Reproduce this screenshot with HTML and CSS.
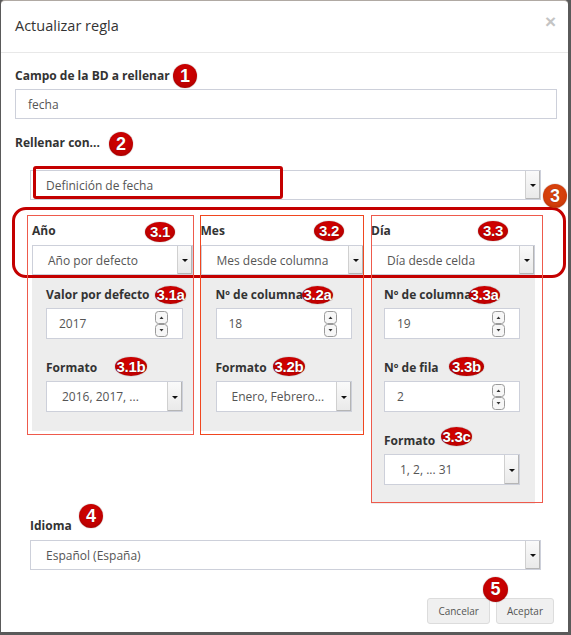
FILE: index.html
```html
<!DOCTYPE html>
<html lang="es">
<head>
<meta charset="utf-8">
<title>Actualizar regla</title>
<link rel="stylesheet" href="styles.css">
</head>
<body>
<div class="modal">
  <div class="modal-header">
    <h4 class="title">Actualizar regla</h4>
    <span class="close">×</span>
  </div>
  <div class="modal-body">
    <div class="group">
      <div class="lbl">Campo de la BD a rellenar</div>
      <div class="input wide">fecha</div>
    </div>
    <div class="group g2">
      <div class="lbl">Rellenar con...</div>
      <div class="select indent"><span class="val">Definición de fecha</span><span class="arrow"></span></div>
    </div>
    <div class="cols">
      <div class="col">
        <div class="lbl">Año</div>
        <div class="select csel"><span class="val">Año por defecto</span><span class="arrow"></span></div>
        <div class="panel p1">
          <div class="pg">
            <div class="lbl">Valor por defecto</div>
            <div class="input num"><span class="val">2017</span><span class="spin"><svg width="13" height="26" viewBox="0 0 13 26"><rect x="0.5" y="0.5" width="12" height="12" rx="3" fill="#f7f7f7" stroke="#9a9a9a"/><rect x="0.5" y="13.5" width="12" height="12" rx="3" fill="#f7f7f7" stroke="#9a9a9a"/><path d="M4.5 8 L6.5 5.5 L8.5 8 Z" fill="#333"/><path d="M4.5 18 L6.5 20.5 L8.5 18 Z" fill="#333"/></svg></span></div>
          </div>
          <div class="pg">
            <div class="lbl">Formato</div>
            <div class="select psel"><span class="val">2016, 2017, ...</span><span class="arrow"></span></div>
          </div>
        </div>
      </div>
      <div class="col">
        <div class="lbl">Mes</div>
        <div class="select csel"><span class="val">Mes desde columna</span><span class="arrow"></span></div>
        <div class="panel p2">
          <div class="pg">
            <div class="lbl">Nº de columna</div>
            <div class="input num"><span class="val">18</span><span class="spin"><svg width="13" height="26" viewBox="0 0 13 26"><rect x="0.5" y="0.5" width="12" height="12" rx="3" fill="#f7f7f7" stroke="#9a9a9a"/><rect x="0.5" y="13.5" width="12" height="12" rx="3" fill="#f7f7f7" stroke="#9a9a9a"/><path d="M4.5 8 L6.5 5.5 L8.5 8 Z" fill="#333"/><path d="M4.5 18 L6.5 20.5 L8.5 18 Z" fill="#333"/></svg></span></div>
          </div>
          <div class="pg">
            <div class="lbl">Formato</div>
            <div class="select psel"><span class="val">Enero, Febrero...</span><span class="arrow"></span></div>
          </div>
        </div>
      </div>
      <div class="col">
        <div class="lbl">Día</div>
        <div class="select csel"><span class="val">Día desde celda</span><span class="arrow"></span></div>
        <div class="panel p3">
          <div class="pg">
            <div class="lbl">Nº de columna</div>
            <div class="input num"><span class="val">19</span><span class="spin"><svg width="13" height="26" viewBox="0 0 13 26"><rect x="0.5" y="0.5" width="12" height="12" rx="3" fill="#f7f7f7" stroke="#9a9a9a"/><rect x="0.5" y="13.5" width="12" height="12" rx="3" fill="#f7f7f7" stroke="#9a9a9a"/><path d="M4.5 8 L6.5 5.5 L8.5 8 Z" fill="#333"/><path d="M4.5 18 L6.5 20.5 L8.5 18 Z" fill="#333"/></svg></span></div>
          </div>
          <div class="pg">
            <div class="lbl">Nº de fila</div>
            <div class="input num"><span class="val">2</span><span class="spin"><svg width="13" height="26" viewBox="0 0 13 26"><rect x="0.5" y="0.5" width="12" height="12" rx="3" fill="#f7f7f7" stroke="#9a9a9a"/><rect x="0.5" y="13.5" width="12" height="12" rx="3" fill="#f7f7f7" stroke="#9a9a9a"/><path d="M4.5 8 L6.5 5.5 L8.5 8 Z" fill="#333"/><path d="M4.5 18 L6.5 20.5 L8.5 18 Z" fill="#333"/></svg></span></div>
          </div>
          <div class="pg">
            <div class="lbl">Formato</div>
            <div class="select psel"><span class="val">1, 2, ... 31</span><span class="arrow"></span></div>
          </div>
        </div>
      </div>
    </div>
    <div class="group g4">
      <div class="lbl">Idioma</div>
      <div class="select indent"><span class="val">Español (España)</span><span class="arrow"></span></div>
    </div>
  </div>
  <div class="modal-footer">
    <button class="btn">Cancelar</button>
    <button class="btn">Aceptar</button>
  </div>
</div>

<div class="box box-def"></div>
<div class="box box-big"></div>
<div class="thin t1"></div>
<div class="thin t2"></div>
<div class="thin t3"></div>

<div class="num-b n1">1</div>
<div class="num-b n2">2</div>
<div class="num-b n3">3</div>
<div class="num-b n4">4</div>
<div class="num-b n5">5</div>

<div class="tag a31">3.1</div>
<div class="tag a32">3.2</div>
<div class="tag a33">3.3</div>
<div class="tag a31a">3.1a</div>
<div class="tag a32a">3.2a</div>
<div class="tag a33a">3.3a</div>
<div class="tag a31b">3.1b</div>
<div class="tag a32b">3.2b</div>
<div class="tag a33b">3.3b</div>
<div class="tag a33c">3.3c</div>
</body>
</html>
```

FILE: styles.css
```css
html, body {
  margin: 0;
  padding: 0;
}
body {
  position: relative;
  width: 571px;
  height: 635px;
  background: #5a5a5a;
  font-family: "Open Sans", "Liberation Sans", sans-serif;
  overflow: hidden;
}
.modal {
  box-sizing: border-box;
  margin: 0 3px 0 1px;
  width: 567px;
  height: 632px;
  background: #fff;
  border-top: 1px solid #b0a9a3;
  border-radius: 4px 4px 0 0;
  display: flex;
  flex-direction: column;
}
.modal-header {
  height: 51px;
  border-bottom: 1px solid #e8e8e8;
  display: flex;
  align-items: center;
  justify-content: space-between;
  padding: 0 12px 0 14px;
}
.title {
  margin: 0;
  font-size: 14.5px;
  font-weight: 400;
  color: #333;
  line-height: 1;
}
.close {
  font-family: "Liberation Sans", sans-serif;
  font-weight: 700;
  font-size: 19px;
  color: #c4c4c4;
  align-self: flex-start;
  margin-top: 10px;
  line-height: 22px;
}
.modal-body {
  padding: 16px 11px 0 14px;
}
.lbl {
  font-weight: 700;
  font-size: 12px;
  line-height: 14px;
  color: #333;
}
.group .lbl {
  margin-bottom: 6px;
}
.input, .select {
  box-sizing: border-box;
  height: 30px;
  border: 1px solid #cdd0da;
  background: #fff;
  font-size: 12px;
  color: #555;
  display: flex;
  align-items: center;
}
.input.wide {
  padding-left: 12px;
}
.g2 {
  margin-top: 17px;
}
.g2 .lbl {
  margin-bottom: 20px;
}
.indent {
  margin: 0 16px 0 15px;
}
.select .val {
  flex: 1;
  padding-left: 15px;
  white-space: nowrap;
  overflow: hidden;
}
.arrow {
  align-self: stretch;
  width: 14px;
  background: linear-gradient(#fafafa, #e9e9e9);
  border-left: 1px solid #d0d0d0;
  box-shadow: inset -1px -1px 0 #b5b5b5;
  position: relative;
}
.arrow::after {
  content: "";
  position: absolute;
  left: 4px;
  top: 50%;
  margin-top: -1px;
  border-left: 3px solid transparent;
  border-right: 3px solid transparent;
  border-top: 3px solid #111;
}
.cols {
  display: grid;
  grid-template-columns: 161px 163px 164px;
  column-gap: 7.5px;
  align-items: start;
  margin: 24px 0 0 17px;
}
.col > .lbl {
  margin-bottom: 7px;
}
.csel {
  height: 30px;
}
.panel {
  background: #ededed;
  padding: 13px 10px 19px 14px;
}
.p2 {
  padding-left: 15px;
  padding-right: 12px;
}
.p3 {
  padding-left: 13px;
  padding-right: 15px;
}
.pg + .pg {
  margin-top: 22px;
}
.pg .lbl {
  margin-bottom: 6px;
}
.panel .input, .panel .select {
  height: 31px;
}
.num {
  padding-left: 12px;
  justify-content: space-between;
}
.num .val {
  flex: 1;
}
.spin {
  width: 13px;
  height: 26px;
  margin-right: 14px;
}
.spin svg {
  display: block;
}
.psel .val {
  padding-left: 15px;
}
.g4 {
  margin-top: 15px;
}
.g4 .lbl {
  padding-left: 15px;
  margin-bottom: 7px;
}
.modal-footer {
  margin-top: 28px;
  display: flex;
  justify-content: flex-end;
  gap: 6px;
  padding-right: 14px;
}
.btn {
  height: 26px;
  padding: 0 10px;
  font-family: "Open Sans", sans-serif;
  font-size: 10px;
  color: #555;
  background: #f0f0f0;
  border: 1px solid #dcdcdc;
  border-radius: 3px;
}

/* annotation overlays */
.box {
  position: absolute;
  box-sizing: border-box;
  border: 3px solid #c40000;
}
.box-def {
  left: 33px; top: 166px; width: 250px; height: 33px;
  border-radius: 3px;
}
.box-big {
  left: 12px; top: 207px; width: 554px; height: 71px;
  border-radius: 14px;
}
.thin {
  position: absolute;
  box-sizing: border-box;
  border: 1px solid #ee5a4c;
}
.t1 { left: 27px; top: 215px; width: 167px; height: 220px; }
.t2 { left: 200px; top: 215px; width: 164px; height: 220px; border-color: #f0461f; }
.t3 { left: 371px; top: 215px; width: 172px; height: 288px; }

.num-b {
  position: absolute;
  width: 24px;
  height: 24px;
  border-radius: 50%;
  background: radial-gradient(circle at 50% 40%, #d80000 0%, #c00000 60%, #8a0000 100%);
  box-shadow: 0 0 1px rgba(60,0,0,.7);
  color: #fff;
  font-family: "Liberation Sans", sans-serif;
  font-weight: 700;
  font-size: 18px;
  line-height: 24px;
  text-align: center;
  text-shadow: 0 0 1px #500;
}
.n1 { left: 173px; top: 64px; }
.n2 { left: 109px; top: 132px; }
.n3 { left: 543px; top: 184px; background: radial-gradient(circle at 50% 40%, #e0460e 0%, #d13d0b 60%, #a02a00 100%); }
.n4 { left: 79px; top: 504px; }
.n5 { left: 483px; top: 577px; width: 25px; height: 25px; line-height: 25px; }

.tag {
  position: absolute;
  height: 19px;
  border-radius: 50%;
  background: radial-gradient(ellipse at 50% 40%, #d80000 0%, #c20000 60%, #900000 100%);
  box-shadow: 0 0 1px rgba(60,0,0,.7);
  color: #fff;
  font-family: "Liberation Sans", sans-serif;
  font-weight: 700;
  font-size: 15px;
  line-height: 19px;
  text-align: center;
  text-shadow: 0 0 1px #400;
  letter-spacing: -0.3px;
}
.a31 { left: 145px; top: 222px; width: 30px; height: 20px; line-height: 20px; }
.a32 { left: 314px; top: 221px; width: 30px; height: 20px; line-height: 20px; }
.a33 { left: 478px; top: 221px; width: 30px; height: 20px; line-height: 20px; }
.a31a { left: 155px; top: 286px; width: 31px; height: 18px; line-height: 18px; }
.a32a { left: 302px; top: 286px; width: 31px; height: 18px; line-height: 18px; }
.a33a { left: 469px; top: 286px; width: 31px; height: 18px; line-height: 18px; }
.a31b { left: 115px; top: 357px; width: 32px; }
.a32b { left: 273px; top: 357px; width: 32px; }
.a33b { left: 449px; top: 357px; width: 35px; }
.a33c { left: 441px; top: 427px; width: 31px; }
```
